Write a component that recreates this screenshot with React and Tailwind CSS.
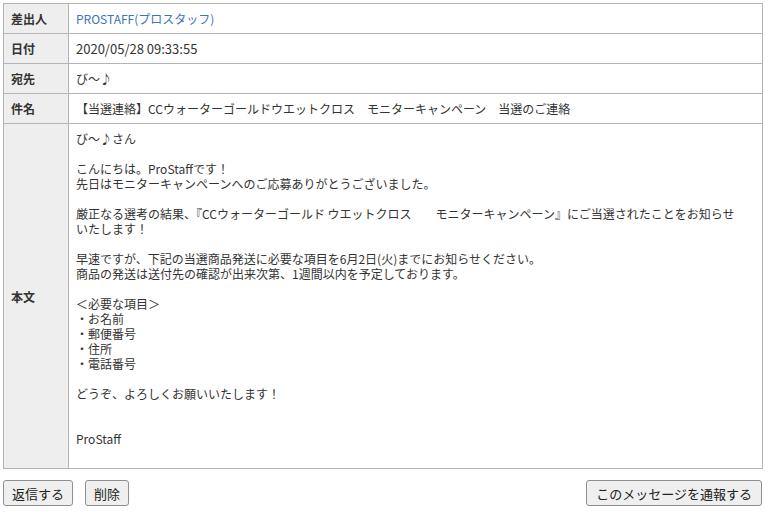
import React from "react";

const font = { fontFamily: '"Noto Sans CJK JP", "Noto Sans", sans-serif' };

function Row({ label, children }) {
  return (
    <tr>
      <th className="whitespace-nowrap border border-[#b4b4b4] bg-[#eeeeee] px-[7px] py-[7px] text-left align-middle text-[12px] font-bold leading-[15px] text-[#333]">
        {label}
      </th>
      <td className="border border-[#b4b4b4] bg-white px-[7px] py-[7px] text-[12px] leading-[15px] text-[#333]">
        {children}
      </td>
    </tr>
  );
}

const bodyLines = [
  "び〜♪さん",
  "",
  "こんにちは。ProStaffです！",
  "先日はモニターキャンペーンへのご応募ありがとうございました。",
  "",
  "厳正なる選考の結果、『CCウォーターゴールド ウエットクロス　　モニターキャンペーン』にご当選されたことをお知らせ",
  "いたします！",
  "",
  "早速ですが、下記の当選商品発送に必要な項目を6月2日(火)までにお知らせください。",
  "商品の発送は送付先の確認が出来次第、1週間以内を予定しております。",
  "",
  "＜必要な項目＞",
  "・お名前",
  "・郵便番号",
  "・住所",
  "・電話番号",
  "",
  "どうぞ、よろしくお願いいたします！",
  "",
  "",
  "ProStaff",
  "",
];

export default function App() {
  return (
    <div className="h-[512px] w-[768px] overflow-hidden bg-white pl-[3px] pr-[5px] pt-[3px]" style={font}>
      <table className="w-[760px] table-fixed border-collapse">
        <colgroup>
          <col className="w-[65px]" />
          <col />
        </colgroup>
        <tbody>
          <Row label="差出人">
            <span className="text-[#3b73c0]">PROSTAFF(プロスタッフ)</span>
          </Row>
          <Row label="日付">
            <span className="text-[13px]">2020/05/28 09:33:55</span>
          </Row>
          <Row label="宛先">び〜♪</Row>
          <Row label="件名">【当選連絡】CCウォーターゴールドウエットクロス　モニターキャンペーン　当選のご連絡</Row>
          <Row label="本文">
            {bodyLines.map((l, i) => (
              <div key={i} className="h-[15px] whitespace-pre">
                {l}
              </div>
            ))}
          </Row>
        </tbody>
      </table>
      <div className="mt-[11px] flex items-center">
        <button className="h-[26px] rounded-[3px] border border-[#8f8f8f] bg-[#efefef] px-[8px] text-[13px] leading-[15px] text-[#222]">
          返信する
        </button>
        <button className="ml-[12px] h-[26px] rounded-[3px] border border-[#8f8f8f] bg-[#efefef] px-[8px] text-[13px] leading-[15px] text-[#222]">
          削除
        </button>
        <button className="ml-auto mr-[1px] h-[26px] rounded-[3px] border border-[#8f8f8f] bg-[#efefef] px-[9px] text-[13px] leading-[15px] text-[#222]">
          このメッセージを通報する
        </button>
      </div>
    </div>
  );
}
